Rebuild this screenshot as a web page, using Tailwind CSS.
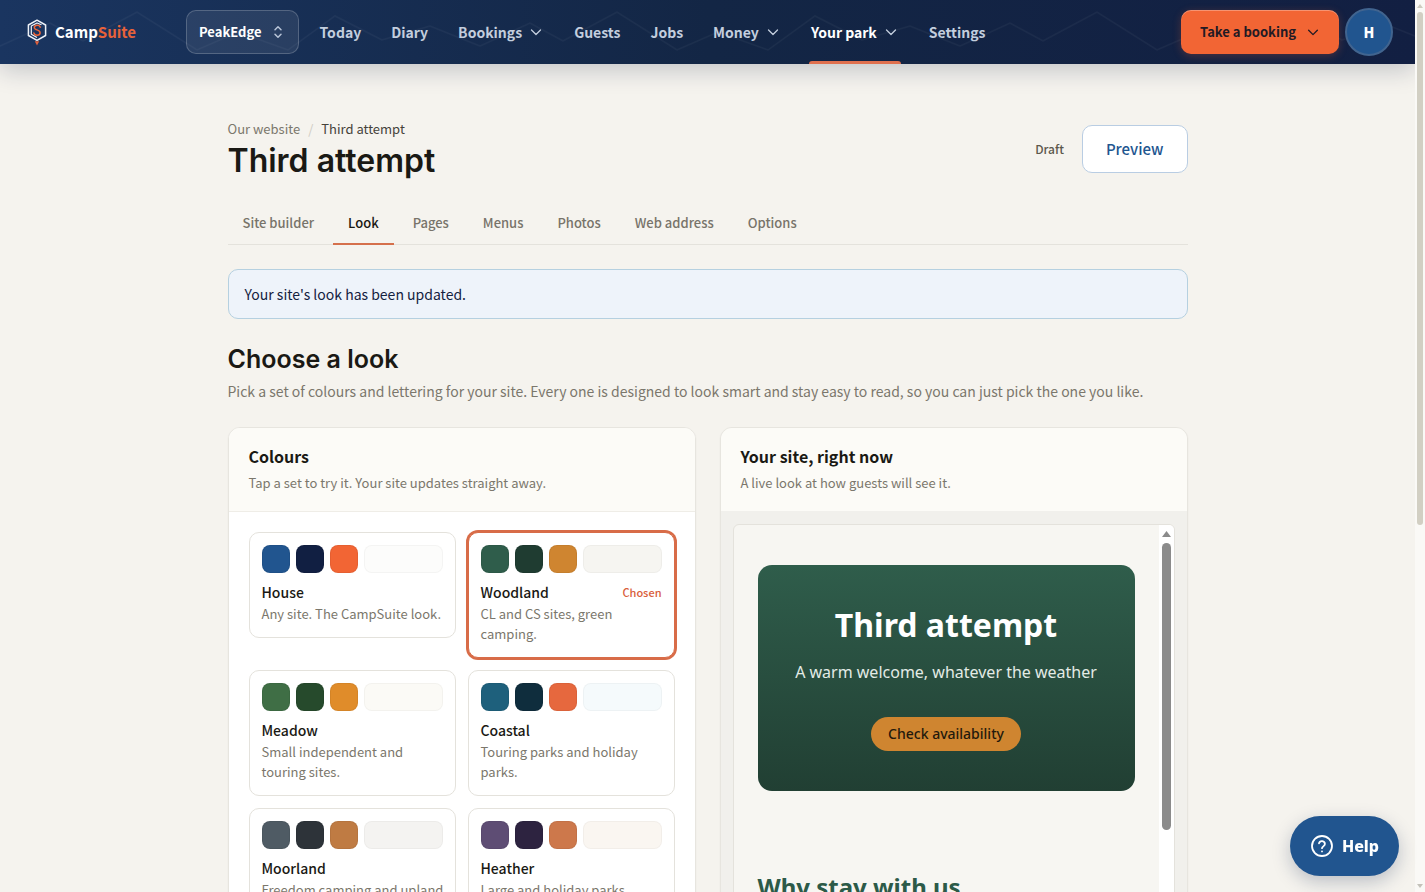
<!DOCTYPE html>
<html lang="en">
<head>
    <meta charset="UTF-8">
    <meta name="viewport" content="width=device-width, initial-scale=1.0">
    <title>Third attempt - Look | CampSuite</title>
    <script src="https://cdn.jsdelivr.net/npm/@tailwindcss/browser@4"></script>
</head>
<body class="bg-[#f5f3ee] h-screen overflow-hidden flex font-['Noto_Sans_CJK_SC','Noto_Sans',sans-serif] text-[#1a1914]">

    <div class="flex-1 min-w-0 h-screen overflow-hidden">
        <!-- Header -->
        <header class="relative z-10 h-16 flex items-center pl-[27px] pr-[22px] bg-linear-to-r from-[#1a3560] via-[#132645] to-[#121f42] shadow-[0_6px_24px_rgba(20,33,66,0.22)]">
            <svg class="absolute inset-0 w-full h-full" aria-hidden="true">
                <defs>
                    <pattern id="ridge" width="480" height="64" patternUnits="userSpaceOnUse">
                        <path d="M0 46 50 23 83 41 137 12 197 50 238 32 288 50 335 16 382 40 430 26 480 46" fill="none" stroke="#fff" stroke-opacity=".04" stroke-width="1.5"/>
                    </pattern>
                </defs>
                <rect width="100%" height="64" fill="url(#ridge)"/>
            </svg>

            <a href="#" class="relative flex items-center gap-2 w-[159px] shrink-0">
                <svg width="20" height="27" viewBox="0 0 20 27" fill="none">
                    <path d="M10 1.2 18.6 6v10.5L10 21.3 1.4 16.500V6z" stroke="#eef2f8" stroke-width="1.5" stroke-linejoin="round"/>
                    <path d="M14.500 5.800 10 4 4.300 7v8.300L10 18.500" stroke="#eef2f8" stroke-width="1.200" stroke-linejoin="round"/>
                    <path d="M13.200 8.200C12.600 5.600 7.600 5.500 7.300 8.400 7 11.500 13.300 10.300 13.100 13.900 12.900 17 7.500 16.900 6.900 13.900" stroke="#f06537" stroke-width="1.500" stroke-linecap="round"/>
                    <path d="M7.800 22.300h4.400L10 26.500z" fill="#e0603c"/>
                </svg>
                <span class="text-[15px] leading-6 font-bold text-white">Camp<span class="text-[#e8623a]">Suite</span></span>
            </a>

            <button type="button" class="relative shrink-0 h-11 px-3 flex items-center gap-2 rounded-[10px] border border-white/20 bg-white/8 text-white text-[13px] font-bold">
                PeakEdge
                <svg width="16" height="16" viewBox="0 0 16 16" fill="none" stroke="#b9c5d8" stroke-width="1.500" stroke-linecap="round" stroke-linejoin="round"><path d="m5 5.800 3-3 3 3M5 10.200l3 3 3-3"/></svg>
            </button>

            <nav class="relative h-16 ml-[19px] flex items-stretch gap-[26px] text-sm font-bold text-[#c3cede]">
                <a href="#" class="px-0.5 flex items-center">Today</a>
                <a href="#" class="px-0.5 flex items-center">Diary</a>
                <a href="#" class="px-0.5 flex items-center gap-1.5">Bookings
                    <svg width="16" height="16" viewBox="0 0 16 16" fill="none" stroke="currentColor" stroke-width="1.300" stroke-linecap="round" stroke-linejoin="round"><path d="m3.500 6 4.500 4.500L12.500 6"/></svg>
                </a>
                <a href="#" class="px-0.5 flex items-center">Guests</a>
                <a href="#" class="px-0.5 flex items-center">Jobs</a>
                <a href="#" class="px-0.5 flex items-center gap-1.5">Money
                    <svg width="16" height="16" viewBox="0 0 16 16" fill="none" stroke="currentColor" stroke-width="1.300" stroke-linecap="round" stroke-linejoin="round"><path d="m3.500 6 4.500 4.500L12.500 6"/></svg>
                </a>
                <a href="#" class="relative px-0.5 flex items-center gap-1.5 text-white" aria-current="page">Your park
                    <svg width="16" height="16" viewBox="0 0 16 16" fill="none" stroke="#c3cede" stroke-width="1.300" stroke-linecap="round" stroke-linejoin="round"><path d="m3.500 6 4.500 4.500L12.500 6"/></svg>
                    <span class="absolute inset-x-0 bottom-0 h-[3px] rounded-t-sm bg-[#e0704f]"></span>
                </a>
                <a href="#" class="px-0.5 flex items-center">Settings</a>
            </nav>

            <div class="relative ml-auto shrink-0 flex items-center gap-1.5">
                <button type="button" class="h-11 px-[19px] flex items-center gap-2.5 rounded-[10px] bg-[#f26534] text-[#221a24] text-[13px] font-bold shadow-[0_2px_8px_rgba(242,101,52,0.25),inset_0_1px_0_rgba(255,255,255,0.3)]">
                    Take a booking
                    <svg width="14" height="14" viewBox="0 0 16 16" fill="none" stroke="currentColor" stroke-width="1.500" stroke-linecap="round" stroke-linejoin="round"><path d="m3 6 5 5 5-5"/></svg>
                </button>
                <button type="button" class="size-12 rounded-full border-2 border-[#41648f] bg-[#21558f] text-white text-sm font-black">H</button>
            </div>
        </header>

        <main class="max-w-[960px] mx-auto pt-[55px]">
            <!-- Page title -->
            <div class="flex items-start justify-between">
                <div>
                    <nav class="flex gap-2 text-[13px] leading-5 text-[#7b776c]" aria-label="Breadcrumb">
                        <a href="#">Our website</a>
                        <span class="text-[#cfccc3]">/</span>
                        <span class="text-[#45423a]">Third attempt</span>
                    </nav>
                    <h1 class="mt-0.5 font-['Inter',sans-serif] text-[32px] leading-10 font-semibold">Third attempt</h1>
                </div>
                <div class="flex items-center gap-[18px] pt-1.5">
                    <span class="text-xs font-medium text-[#5c584d]">Draft</span>
                    <a href="#" class="h-12 px-[23px] flex items-center rounded-[10px] border border-[#b9cde3] bg-white text-[15px] font-medium text-[#21558f]">Preview</a>
                </div>
            </div>

            <!-- Tabs -->
            <nav class="mt-5 flex gap-1 border-b border-[#e4e2dc] text-[13px] leading-5 font-medium text-[#78746a]">
                <a href="#" class="px-[15px] pt-3 pb-2.5 -mb-px border-b-2 border-transparent">Site builder</a>
                <a href="#" class="px-[15px] pt-3 pb-2.5 -mb-px border-b-2 border-[#d5704c] text-[#1a1914]" aria-current="page">Look</a>
                <a href="#" class="px-[15px] pt-3 pb-2.5 -mb-px border-b-2 border-transparent">Pages</a>
                <a href="#" class="px-[15px] pt-3 pb-2.5 -mb-px border-b-2 border-transparent">Menus</a>
                <a href="#" class="px-[15px] pt-3 pb-2.5 -mb-px border-b-2 border-transparent">Photos</a>
                <a href="#" class="px-[15px] pt-3 pb-2.5 -mb-px border-b-2 border-transparent">Web address</a>
                <a href="#" class="px-[15px] pt-3 pb-2.5 -mb-px border-b-2 border-transparent">Options</a>
            </nav>

            <div role="status" class="mt-6 px-4 py-3 rounded-[10px] border border-[#b5d0e0] bg-[#eef3fa] text-sm leading-6 text-[#14213f]">Your site's look has been updated.</div>

            <h2 class="mt-6 font-['Inter',sans-serif] text-[25px] leading-8 font-semibold">Choose a look</h2>
            <p class="mt-1 text-sm leading-6 text-[#7b776c]">Pick a set of colours and lettering for your site. Every one is designed to look smart and stay easy to read, so you can just pick the one you like.</p>

            <div class="mt-6 grid grid-cols-2 gap-6">
                <!-- Colour sets -->
                <section class="rounded-xl border border-[#e7e5df] bg-white overflow-hidden shadow-xs">
                    <div class="px-5 pt-4 pb-[18px] border-b border-[#efede7] bg-[#fcfbf7]">
                        <h3 class="text-base leading-6 font-bold">Colours</h3>
                        <p class="mt-[5px] text-[13px] leading-5 text-[#7b776c]">Tap a set to try it. Your site updates straight away.</p>
                    </div>
                    <div id="looks" class="p-5 grid grid-cols-2 items-start gap-3"></div>
                </section>

                <!-- Live preview -->
                <section class="rounded-xl border border-[#e7e5df] bg-[#f1f0ec] overflow-hidden shadow-xs">
                    <div class="px-5 pt-4 pb-[18px] bg-[#fcfbf7]">
                        <h3 class="text-base leading-6 font-bold">Your site, right now</h3>
                        <p class="mt-[5px] text-[13px] leading-5 text-[#7b776c]">A live look at how guests will see it.</p>
                    </div>
                    <div class="p-3 pt-[13px]">
                        <div class="flex rounded-md border border-[#e4e2dc] bg-[#f7f6f2] overflow-hidden font-['Noto_Sans',sans-serif]">
                            <div class="flex-1 px-6 py-10">
                                <div class="px-6 pt-9 pb-10 rounded-[14px] bg-linear-to-b from-[#2f5d4b] to-[#213f33] text-center">
                                    <p class="text-[32px] leading-12 font-bold text-white">Third attempt</p>
                                    <p class="mt-[11px] text-base leading-6 text-[#e3ebe6]">A warm welcome, whatever the weather</p>
                                    <button type="button" class="mt-[33px] h-[34px] px-[17px] rounded-full bg-[#cf8530] text-sm leading-5 font-medium text-[#23190c]">Check availability</button>
                                </div>
                                <h4 class="mt-20 text-2xl leading-8 font-bold text-[#2c5a48]">Why stay with us</h4>
                                <p class="mt-4 h-40 text-base">Quiet pitches and friendly faces.</p>
                            </div>
                            <div class="w-[15px] bg-white flex flex-col items-center pt-1.5">
                                <svg width="9" height="6" viewBox="0 0 9 6"><path d="M4.500 0 9 6H0z" fill="#8b8b8b"/></svg>
                                <div class="mt-1.5 w-[9px] h-[287px] rounded-full bg-[#8b8b8b]"></div>
                            </div>
                        </div>
                    </div>
                </section>
            </div>
        </main>
    </div>

    <!-- Page scrollbar -->
    <div class="w-[10px] shrink-0 bg-[#faf9f6] flex flex-col items-center pt-1 pb-1" aria-hidden="true">
        <svg width="6" height="4" viewBox="0 0 6 4"><path d="M3 0 6 4H0z" fill="#cfccc0"/></svg>
        <div class="mt-1 w-1.5 h-[58%] rounded-full bg-[#d2cfc3]"></div>
        <svg class="mt-auto" width="6" height="4" viewBox="0 0 6 4"><path d="M0 0h6L3 4z" fill="#c4c2ba"/></svg>
    </div>

    <button type="button" class="fixed right-[26px] bottom-4 h-[60px] px-5 flex items-center gap-2 rounded-full bg-[#21558f] text-white text-base font-['Noto_Sans',sans-serif] font-extrabold shadow-[0_6px_18px_rgba(20,40,80,0.25)]">
        <svg width="24" height="24" viewBox="0 0 24 24" fill="none" stroke="currentColor" stroke-width="1.800" stroke-linecap="round" stroke-linejoin="round"><circle cx="12" cy="12" r="10"/><path d="M9 9.300a3 3 0 0 1 5.900.8c0 2-2.900 2.500-2.900 4.100M12 17.300v.1"/></svg>
        Help
    </button>

    <script>
        const looks = [
            { name: 'House', text: 'Any site. The CampSuite look.', colours: ['#21558f', '#111f42', '#f26534', '#fcfcfb'] },
            { name: 'Woodland', text: 'CL and CS sites, green camping.', colours: ['#2f5d4b', '#1f3c31', '#cf8530', '#f6f5f1'], chosen: true },
            { name: 'Meadow', text: 'Small independent and touring sites.', colours: ['#3f6e45', '#264a2c', '#e08c2a', '#fbfaf6'] },
            { name: 'Coastal', text: 'Touring parks and holiday parks.', colours: ['#1e607c', '#0f2d3d', '#e6683e', '#f5fafc'] },
            { name: 'Moorland', text: 'Freedom camping and upland sites.', colours: ['#4f5b64', '#2d3339', '#bf7b43', '#f4f3f1'] },
            { name: 'Heather', text: 'Large and holiday parks.', colours: ['#5e4d74', '#2d2340', '#cd784b', '#faf6f1'] }
        ];

        const list = document.getElementById('looks');

        looks.forEach((look) => {
            const card = document.createElement('button');
            card.type = 'button';
            card.className = look.chosen
                ? 'block text-left p-3 rounded-[10px] border border-[#d86c48] ring-2 ring-[#d86c48] bg-white'
                : 'block text-left p-3 rounded-[10px] border border-[#e4e2dc] bg-white';

            const [a, b, c, d] = look.colours;
            card.innerHTML = `
                <span class="flex gap-1.5">
                    <span class="size-7 rounded-lg border border-black/5" style="background:${a}"></span>
                    <span class="size-7 rounded-lg border border-black/5" style="background:${b}"></span>
                    <span class="size-7 rounded-lg border border-black/5" style="background:${c}"></span>
                    <span class="flex-1 h-7 rounded-lg border border-black/3" style="background:${d}"></span>
                </span>
                <span class="mt-[7px] flex items-center justify-between">
                    <span class="text-sm leading-6 font-medium">${look.name}</span>
                    ${look.chosen ? '<span class="text-[11px] leading-5 font-medium text-[#d9603c]">Chosen</span>' : ''}
                </span>
                <span class="block pb-px -mr-1 text-[13px] leading-5 text-[#7b776c]">${look.text}</span>`;
            list.appendChild(card);
        });
    </script>
</body>
</html>
